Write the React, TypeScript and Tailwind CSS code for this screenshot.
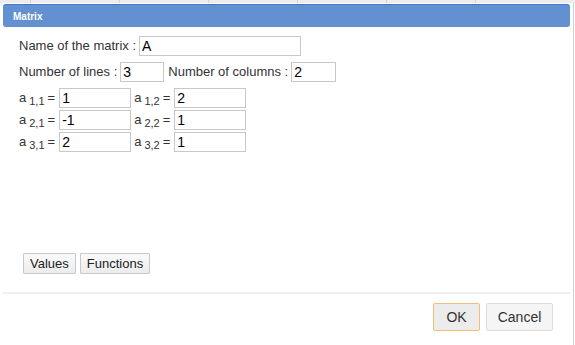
function Cell({ i, j, value }: { i: number; j: number; value: string }) {
  return (
    <div className="flex items-center h-[20px]">
      <span className="text-[13px]">a</span>
      <span className="text-[11px] ml-[3px] relative top-[3px]">{i},{j}</span>
      <span className="text-[13px] ml-[3px] mr-[4px]">=</span>
      <input
        readOnly
        value={value}
        className="w-[72px] h-[20px] border border-[#c8c8c8] px-[2px] text-[14px] text-[#000] outline-none"
      />
    </div>
  )
}

export default function App() {
  const rows = [
    ['1', '2'],
    ['-1', '1'],
    ['2', '1'],
  ]
  return (
    <div className="w-[575px] h-[345px] bg-white overflow-hidden text-[#333] font-['Liberation_Sans',Arial,sans-serif]">
      <div className="h-[3px] bg-[#ececec] flex gap-[88px] pl-[30px]">
        <div className="w-px h-[3px] bg-[#d6d6d6]" />
        <div className="w-px h-[3px] bg-[#d6d6d6]" />
        <div className="w-px h-[3px] bg-[#d6d6d6]" />
        <div className="w-px h-[3px] bg-[#d6d6d6]" />
        <div className="w-px h-[3px] bg-[#d6d6d6]" />
        <div className="w-px h-[3px] bg-[#d6d6d6]" />
      </div>
      <div className="w-[574px] h-[342px] border-r border-[#d0d0d0] flex flex-col">
        <div className="mx-[3px] mt-px h-[23px] rounded-[3px] bg-[#6290d0] border-t border-[#3f78d8] flex items-center pl-[10px]">
          <span className="text-white font-bold text-[10px]">Matrix</span>
        </div>

        <div className="pl-[19px] pt-[9px] flex flex-col text-[13px]">
          <div className="flex items-center h-[20px]">
            <span>Name of the matrix :</span>
            <input
              readOnly
              value="A"
              className="ml-[3px] w-[162px] h-[20px] border border-[#c8c8c8] px-[2px] text-[14px] text-[#000] outline-none"
            />
          </div>
          <div className="flex items-center h-[20px] mt-[6px]">
            <span>Number of lines :</span>
            <input
              readOnly
              value="3"
              className="ml-[3px] w-[44px] h-[20px] border border-[#c8c8c8] px-[2px] text-[14px] text-[#000] outline-none"
            />
            <span className="ml-[4px]">Number of columns :</span>
            <input
              readOnly
              value="2"
              className="ml-[3px] w-[45px] h-[20px] border border-[#c8c8c8] px-[2px] text-[14px] text-[#000] outline-none"
            />
          </div>
          <div className="flex flex-col gap-[2px] mt-[6px]">
            {rows.map((r, i) => (
              <div key={i} className="flex items-center gap-[3px]">
                {r.map((v, j) => (
                  <Cell key={j} i={i + 1} j={j + 1} value={v} />
                ))}
              </div>
            ))}
          </div>
        </div>

        <div className="flex gap-[4px] pl-[23px] mt-auto mb-[18px]">
          <button className="h-[21px] px-[6px] border border-[#c8c8c8] bg-gradient-to-b from-[#fafafa] to-[#ececec] text-[13px] text-[#222] rounded-[1px]">
            Values
          </button>
          <button className="h-[21px] px-[6px] border border-[#c8c8c8] bg-gradient-to-b from-[#fafafa] to-[#ececec] text-[13px] text-[#222] rounded-[1px]">
            Functions
          </button>
        </div>

        <div className="mx-[3px] h-[2px] bg-[#efefef]" />

        <div className="flex justify-end gap-[6px] pr-[20px] pt-[9px] pb-[14px]">
          <button className="w-[47px] h-[28px] border border-[#f0c070] bg-[#ececec] rounded-[2px] text-[14px] text-[#333]">
            OK
          </button>
          <button className="w-[67px] h-[28px] border border-[#dcdcdc] bg-[#f5f5f5] rounded-[2px] text-[14px] text-[#333]">
            Cancel
          </button>
        </div>
      </div>
    </div>
  )
}
